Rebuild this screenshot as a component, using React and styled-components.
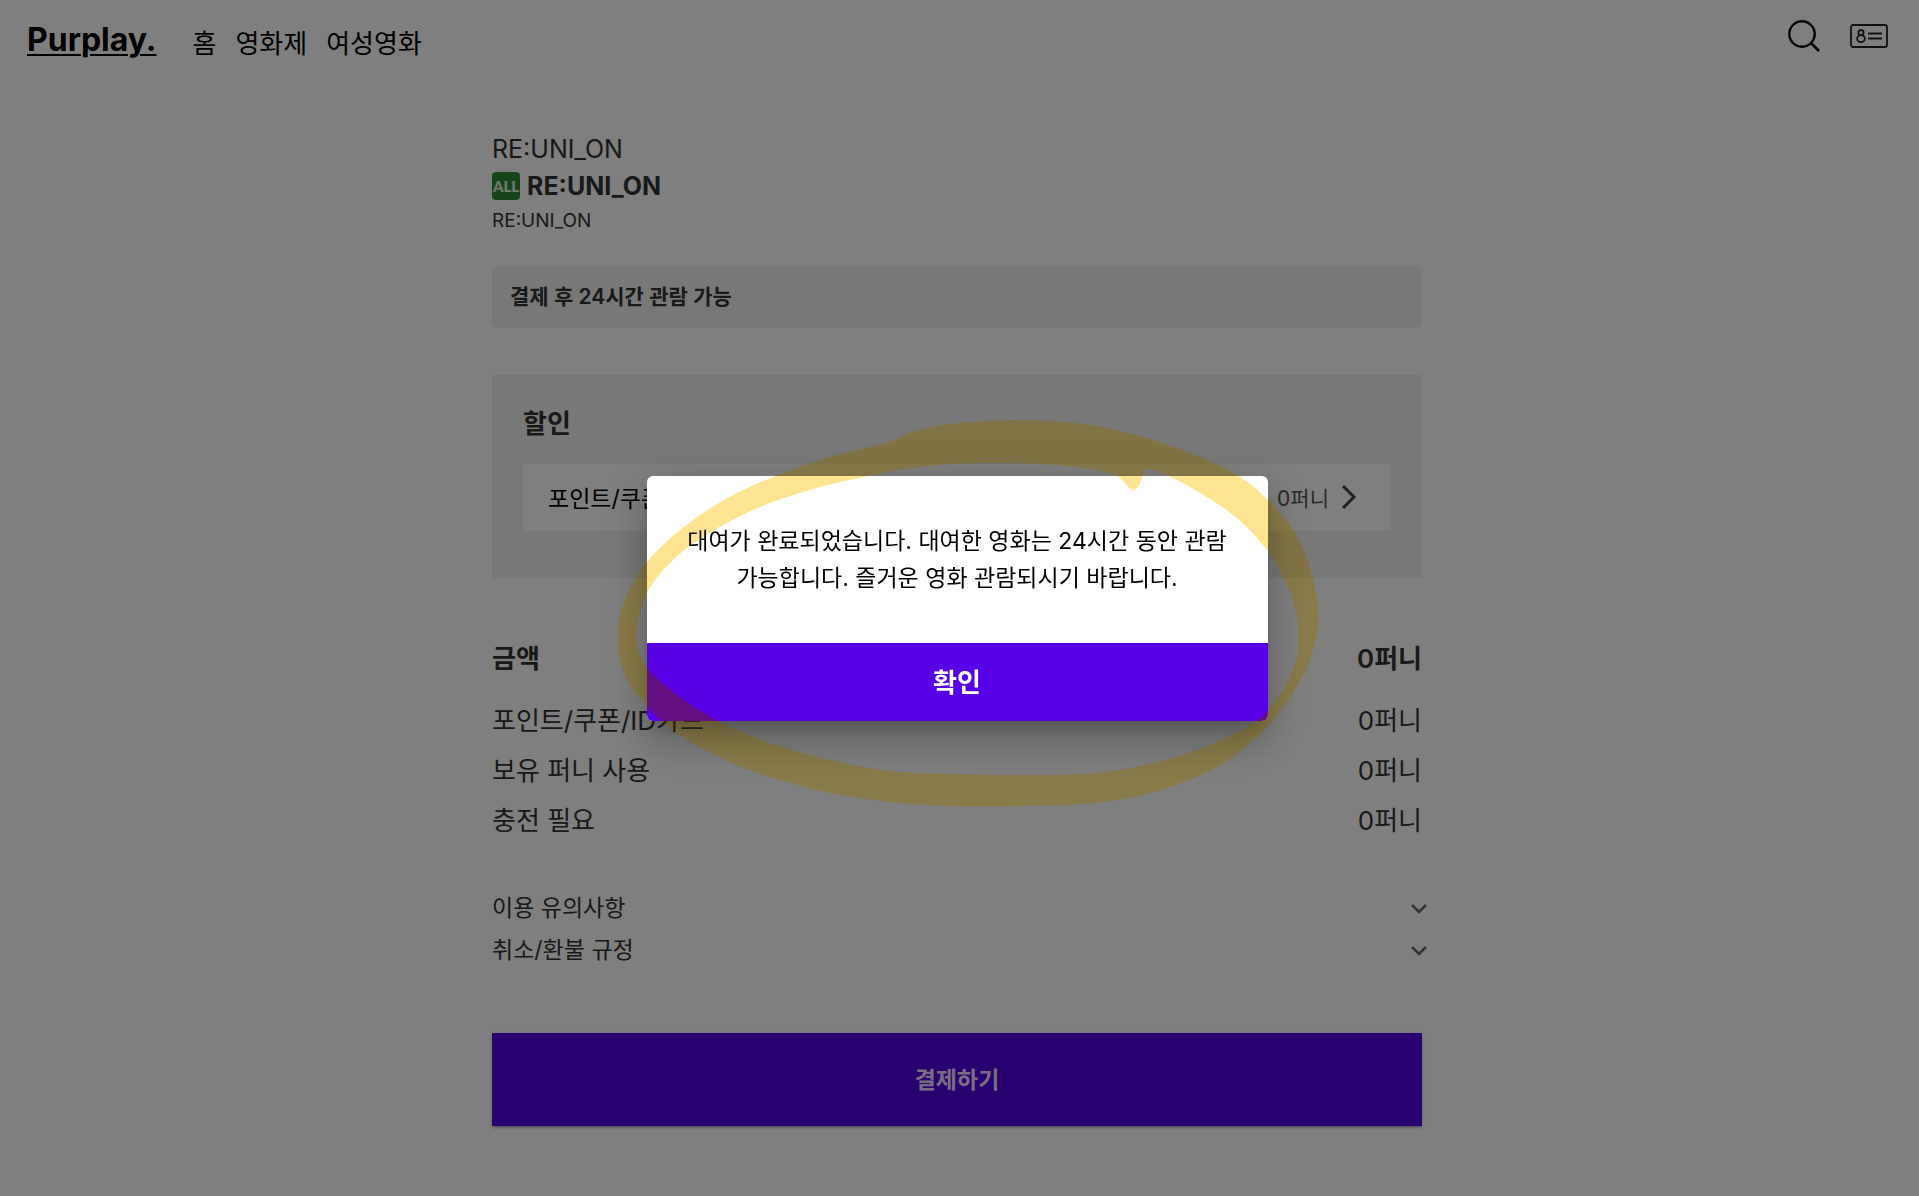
import React from "react";
import styled, { createGlobalStyle } from "styled-components";

const GlobalStyle = createGlobalStyle`
  * {
    box-sizing: border-box;
  }
  html {
    background: #ffffff;
  }
  body {
    margin: 0;
    font-family: Inter, "Noto Sans CJK KR", sans-serif;
    color: #333333;
  }
  button {
    font-family: inherit;
    border: 0;
    cursor: pointer;
  }
`;

const Page = styled.div`
  min-height: 100vh;
  padding-right: 5px;
`;

const Header = styled.header`
  display: flex;
  align-items: flex-start;
  justify-content: space-between;
  height: 86px;
  padding: 17px 26px 0 27px;
  color: #000000;
`;

const Nav = styled.nav`
  display: flex;
  align-items: flex-start;
  gap: 19px;
`;

const Logo = styled.a`
  margin-right: 17px;
  font-size: 32px;
  font-weight: 700;
  line-height: 46px;
  color: inherit;
  text-decoration: underline;
  text-decoration-thickness: 2px;
  text-underline-offset: 3px;
`;

const NavLink = styled.a`
  padding-top: 4px;
  font-size: 26px;
  line-height: 46px;
  color: inherit;
  text-decoration: none;
`;

const Tools = styled.div`
  display: flex;
  align-items: center;
  gap: 30px;
  padding-top: 3px;
`;

const IconButton = styled.button`
  display: flex;
  padding: 0;
  background: none;
  color: inherit;
`;

const Main = styled.main`
  display: flex;
  flex-direction: column;
  max-width: 930px;
  margin: 0 auto;
  padding: 44px 0 70px;
`;

const Series = styled.p`
  margin: 0;
  font-size: 25px;
  line-height: 38px;
`;

const Title = styled.h1`
  display: flex;
  align-items: center;
  gap: 7px;
  margin: 0;
  font-size: 25px;
  font-weight: 700;
  line-height: 36px;
`;

const AllBadge = styled.span`
  display: flex;
  align-items: center;
  justify-content: center;
  width: 28px;
  height: 28px;
  border-radius: 4px;
  background: #2f8a35;
  color: #e8f4e6;
  font-family: Lato, "Liberation Sans", sans-serif;
  font-size: 15px;
  font-weight: 900;
  line-height: 28px;
`;

const Subtitle = styled.p`
  margin: 0;
  font-size: 19px;
  line-height: 34px;
`;

const Notice = styled.p`
  margin: 28px 0 0;
  padding: 0 18px;
  border-radius: 6px;
  background: #f0f0f0;
  font-size: 21px;
  font-weight: 600;
  line-height: 62px;
`;

const Discount = styled.section`
  margin-top: 47px;
  padding: 31px 31px 47px;
  background: #f0f0f0;
`;

const SectionTitle = styled.h2`
  margin: 0;
  font-size: 26px;
  font-weight: 600;
  line-height: 36px;
`;

const CouponButton = styled.button`
  display: flex;
  align-items: center;
  width: 100%;
  height: 67px;
  margin-top: 22px;
  padding: 0 30px 2px 25px;
  border-radius: 3px;
  background: #ffffff;
  font-size: 23px;
  color: #000000;
`;

const CouponValue = styled.span`
  margin: 0 8px 0 auto;
  font-size: 21px;
  color: #555555;
`;

const Amounts = styled.dl`
  display: flex;
  flex-direction: column;
  margin: 56px 0 0;
`;

const AmountRow = styled.div`
  display: flex;
  justify-content: space-between;
  margin-bottom: ${(p) => (p.$total ? 12 : 0)}px;
  font-size: 26px;
  font-weight: ${(p) => (p.$total ? 600 : 400)};
  line-height: 50px;
`;

const AmountLabel = styled.dt`
  margin: 0;
`;

const AmountValue = styled.dd`
  margin: 0;
`;

const Policies = styled.div`
  display: flex;
  flex-direction: column;
  margin: 41px -9px 0 0;
`;

const PolicyButton = styled.button`
  display: flex;
  align-items: center;
  justify-content: space-between;
  padding: 0;
  background: none;
  font-size: 23px;
  line-height: 42px;
  color: #333333;
`;

const PayButton = styled.button`
  height: 93px;
  margin-top: 62px;
  padding: 0 0 3px;
  background: #5000e0;
  box-shadow: 0 3px 1px -2px rgba(0, 0, 0, 0.2), 0 2px 2px rgba(0, 0, 0, 0.14),
    0 1px 5px rgba(0, 0, 0, 0.12);
  font-size: 23px;
  font-weight: 600;
  color: #f2dcff;
`;

const Backdrop = styled.div`
  position: fixed;
  inset: 0;
  background: rgba(0, 0, 0, 0.5);
`;

const Layer = styled.div`
  position: fixed;
  inset: 0;
  display: flex;
  align-items: center;
  justify-content: center;
  padding-right: 5px;
`;

const HighlightLayer = styled(Layer)`
  mix-blend-mode: ${(p) => p.$blend};
  opacity: ${(p) => p.$opacity};
  pointer-events: none;
`;

const Dialog = styled.div`
  width: 621px;
  overflow: hidden;
  border-radius: 6px;
  background: #ffffff;
  box-shadow: 0 11px 15px -7px rgba(0, 0, 0, 0.2),
    0 24px 38px 3px rgba(0, 0, 0, 0.14), 0 9px 46px 8px rgba(0, 0, 0, 0.12);
`;

const Message = styled.p`
  margin: 0;
  padding: 47px 30px 46px;
  font-size: 23px;
  line-height: 37px;
  text-align: center;
  word-break: keep-all;
  color: #000000;
`;

const ConfirmButton = styled.button`
  display: block;
  width: 100%;
  height: 78px;
  padding: 0 0 2px;
  background: #5800e5;
  font-size: 26px;
  font-weight: 600;
  color: #ffffff;
`;

const Chevron = ({ size, points, width, color }) => (
  <svg width={size} height={size} viewBox="0 0 24 24" fill="none" aria-hidden="true">
    <polyline points={points} stroke={color} strokeWidth={width} />
  </svg>
);

const SearchIcon = () => (
  <svg width="32" height="32" viewBox="0 0 32 32" fill="none" stroke="#000000" aria-hidden="true">
    <circle cx="14" cy="14" r="12.7" strokeWidth="2.4" />
    <path d="M23 23L31 31" strokeWidth="2.6" />
  </svg>
);

const IdCardIcon = () => (
  <svg width="38" height="24" viewBox="0 0 38 24" fill="none" stroke="#222222" aria-hidden="true">
    <rect x="1" y="1" width="36" height="22" rx="2" strokeWidth="1.8" />
    <circle cx="11" cy="8.6" r="2.6" strokeWidth="1.8" />
    <ellipse cx="11" cy="14.6" rx="3.9" ry="3.5" strokeWidth="1.8" />
    <path d="M18 9.4H32M18 14.6H32" strokeWidth="2" />
  </svg>
);

const outerEdge = [
  [618, 643], [620, 617], [628, 593], [647, 562], [680, 530], [724, 500], [778, 475],
  [830, 457], [885, 443], [915, 431], [950, 424], [990, 421], [1033, 420], [1083, 424],
  [1120, 431], [1160, 442], [1200, 457], [1237, 475], [1267, 499], [1294, 531], [1311, 571],
  [1318, 610], [1315, 643], [1300, 681], [1267, 727], [1217, 767], [1150, 793],
  [1083, 804], [1017, 806], [950, 806], [890, 802], [830, 793], [784, 781], [737, 765],
  [677, 733], [637, 695], [622, 667],
];

const innerEdge = [
  [637, 627], [638, 650], [649, 670], [677, 695], [718, 721], [770, 743], [830, 760],
  [890, 771], [950, 774], [1017, 775], [1083, 774], [1130, 768], [1183, 755],
  [1225, 738], [1258, 720], [1273, 704], [1287, 683], [1297, 655], [1298, 625],
  [1292, 597], [1283, 577], [1267, 550], [1233, 515], [1183, 483], [1150, 469],
  [1144, 474], [1138, 487], [1131, 489], [1115, 475], [1083, 468], [1040, 464],
  [995, 463], [950, 464], [905, 469], [863, 477], [806, 491], [753, 510], [703, 537],
  [670, 563], [647, 593],
];

// Closed Catmull-Rom curve through the points, written as cubic segments.
const smooth = (pts) => {
  const n = pts.length;
  const at = (i) => pts[(i + n) % n];
  let d = `M${at(0).join(" ")}`;
  for (let i = 0; i < n; i += 1) {
    const [a, b, c, e] = [at(i - 1), at(i), at(i + 1), at(i + 2)];
    d += `C${b[0] + (c[0] - a[0]) / 6} ${b[1] + (c[1] - a[1]) / 6} `;
    d += `${c[0] - (e[0] - b[0]) / 6} ${c[1] - (e[1] - b[1]) / 6} ${c[0]} ${c[1]}`;
  }
  return `${d}Z`;
};

const Highlight = ({ color }) => (
  <svg width="800" height="440" viewBox="557 378 800 440" aria-hidden="true">
    <path d={smooth(outerEdge) + smooth(innerEdge)} fillRule="evenodd" fill={color} />
  </svg>
);

const navItems = ["홈", "영화제", "여성영화"];

const amounts = [
  { label: "금액", value: "0퍼니", total: true },
  { label: "포인트/쿠폰/ID카드", value: "0퍼니" },
  { label: "보유 퍼니 사용", value: "0퍼니" },
  { label: "충전 필요", value: "0퍼니" },
];

const policies = ["이용 유의사항", "취소/환불 규정"];

export default function App() {
  return (
    <>
      <GlobalStyle />
      <Page>
        <Header>
          <Nav>
            <Logo href="#">Purplay.</Logo>
            {navItems.map((item) => (
              <NavLink key={item} href="#">{item}</NavLink>
            ))}
          </Nav>
          <Tools>
            <IconButton aria-label="검색"><SearchIcon /></IconButton>
            <IconButton aria-label="ID카드"><IdCardIcon /></IconButton>
          </Tools>
        </Header>
        <Main>
          <Series>RE:UNI_ON</Series>
          <Title><AllBadge>ALL</AllBadge>RE:UNI_ON</Title>
          <Subtitle>RE:UNI_ON</Subtitle>
          <Notice>결제 후 24시간 관람 가능</Notice>
          <Discount>
            <SectionTitle>할인</SectionTitle>
            <CouponButton>
              포인트/쿠폰/ID카드
              <CouponValue>0퍼니</CouponValue>
              <Chevron size={24} points="6,1 17,12 6,23" width={3} color="#444444" />
            </CouponButton>
          </Discount>
          <Amounts>
            {amounts.map(({ label, value, total }) => (
              <AmountRow key={label} $total={total}>
                <AmountLabel>{label}</AmountLabel>
                <AmountValue>{value}</AmountValue>
              </AmountRow>
            ))}
          </Amounts>
          <Policies>
            {policies.map((label) => (
              <PolicyButton key={label}>
                {label}
                <Chevron size={24} points="5,9 12,16 19,9" width={2.6} color="#666666" />
              </PolicyButton>
            ))}
          </Policies>
          <PayButton>결제하기</PayButton>
        </Main>
      </Page>
      <Backdrop />
      <Layer>
        <Dialog role="dialog" aria-modal="true" aria-label="대여 완료">
          <Message>
            대여가 완료되었습니다. 대여한 영화는 24시간 동안 관람 가능합니다. 즐거운 영화 관람되시기 바랍니다.
          </Message>
          <ConfirmButton>확인</ConfirmButton>
        </Dialog>
      </Layer>
      <HighlightLayer $blend="normal" $opacity={0.07}>
        <Highlight color="#ffd214" />
      </HighlightLayer>
      <HighlightLayer $blend="multiply" $opacity={1}>
        <Highlight color="#ffe99c" />
      </HighlightLayer>
    </>
  );
}
